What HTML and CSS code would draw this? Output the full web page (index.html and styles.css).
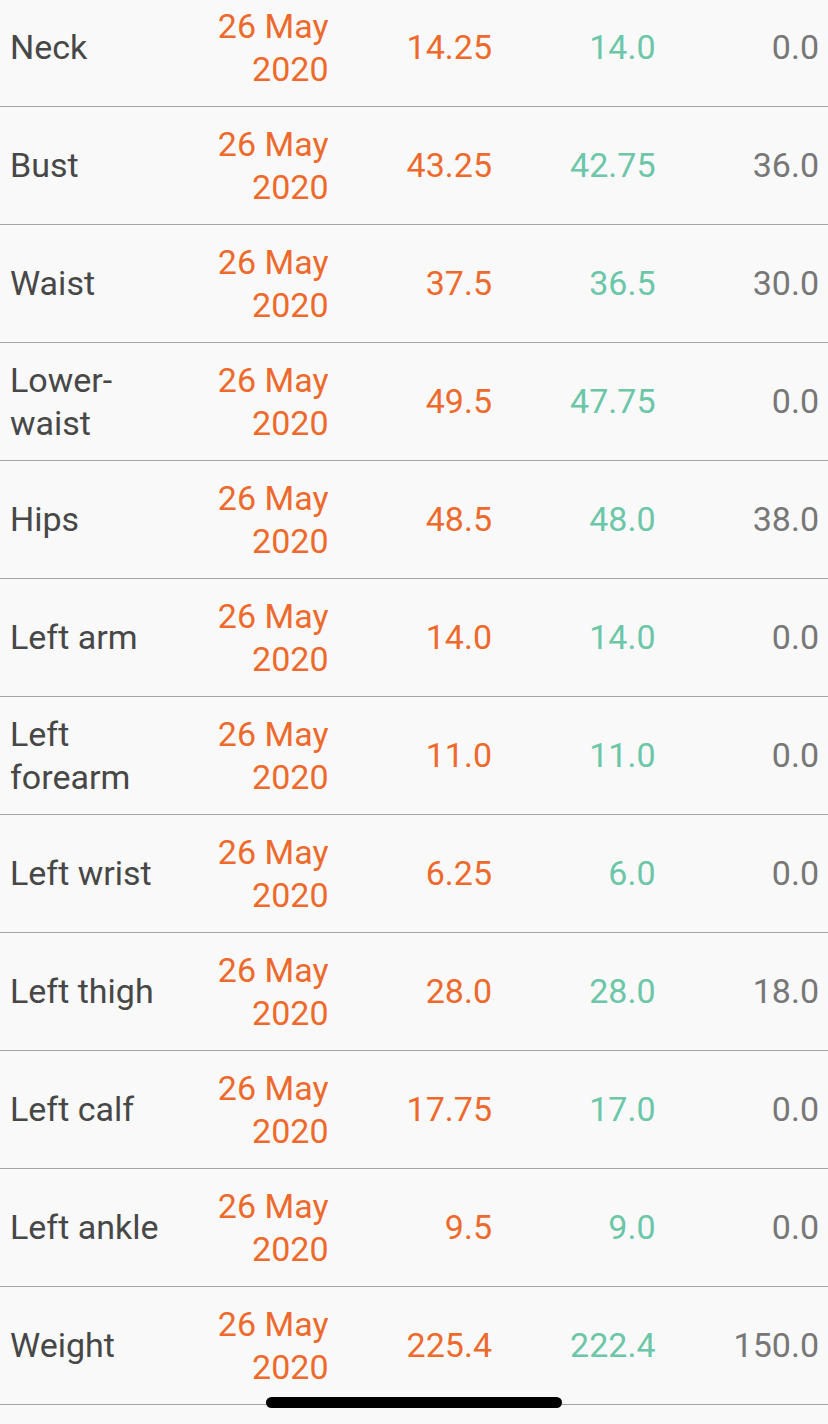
FILE: index.html
```html
<!DOCTYPE html>
<html>
<head>
<meta charset="utf-8">
<link rel="stylesheet" href="styles.css">
</head>
<body>
<div class="list">
  <div class="row"><div class="label">Neck</div><div class="date">26 May 2020</div><div class="cur">14.25</div><div class="prev">14.0</div><div class="goal">0.0</div></div>
  <div class="row"><div class="label">Bust</div><div class="date">26 May 2020</div><div class="cur">43.25</div><div class="prev">42.75</div><div class="goal">36.0</div></div>
  <div class="row"><div class="label">Waist</div><div class="date">26 May 2020</div><div class="cur">37.5</div><div class="prev">36.5</div><div class="goal">30.0</div></div>
  <div class="row"><div class="label">Lower-waist</div><div class="date">26 May 2020</div><div class="cur">49.5</div><div class="prev">47.75</div><div class="goal">0.0</div></div>
  <div class="row"><div class="label">Hips</div><div class="date">26 May 2020</div><div class="cur">48.5</div><div class="prev">48.0</div><div class="goal">38.0</div></div>
  <div class="row"><div class="label">Left arm</div><div class="date">26 May 2020</div><div class="cur">14.0</div><div class="prev">14.0</div><div class="goal">0.0</div></div>
  <div class="row"><div class="label">Left forearm</div><div class="date">26 May 2020</div><div class="cur">11.0</div><div class="prev">11.0</div><div class="goal">0.0</div></div>
  <div class="row"><div class="label">Left wrist</div><div class="date">26 May 2020</div><div class="cur">6.25</div><div class="prev">6.0</div><div class="goal">0.0</div></div>
  <div class="row"><div class="label">Left thigh</div><div class="date">26 May 2020</div><div class="cur">28.0</div><div class="prev">28.0</div><div class="goal">18.0</div></div>
  <div class="row"><div class="label">Left calf</div><div class="date">26 May 2020</div><div class="cur">17.75</div><div class="prev">17.0</div><div class="goal">0.0</div></div>
  <div class="row"><div class="label">Left ankle</div><div class="date">26 May 2020</div><div class="cur">9.5</div><div class="prev">9.0</div><div class="goal">0.0</div></div>
  <div class="row"><div class="label">Weight</div><div class="date">26 May 2020</div><div class="cur">225.4</div><div class="prev">222.4</div><div class="goal">150.0</div></div>
</div>
<div class="home-indicator"></div>
</body>
</html>
```
FILE: styles.css
```css
html, body {
  margin: 0;
  padding: 0;
  background: #f9f9f9;
  overflow: hidden;
  height: 1424px;
}
body {
  font-family: Roboto, "Liberation Sans", sans-serif;
  font-size: 34px;
  line-height: 43px;
  position: relative;
}
.list {
  margin-top: -11px;
}
.row {
  display: grid;
  grid-template-columns: 155px repeat(4, 1fr);
  align-items: center;
  height: 117px;
  padding: 0 9px 0 10px;
  border-bottom: 1px solid #a5a5a5;
}
.label {
  color: #474747;
  word-break: break-word;
}
.date, .cur, .prev, .goal {
  text-align: right;
}
.date, .cur { color: #ee6a2c; }
.date { padding-left: 40px; }
.prev { color: #6cc6a8; }
.goal { color: #777777; }
.home-indicator {
  position: absolute;
  left: 266px;
  top: 1397px;
  width: 296px;
  height: 11px;
  border-radius: 6px;
  background: #000;
}
```
